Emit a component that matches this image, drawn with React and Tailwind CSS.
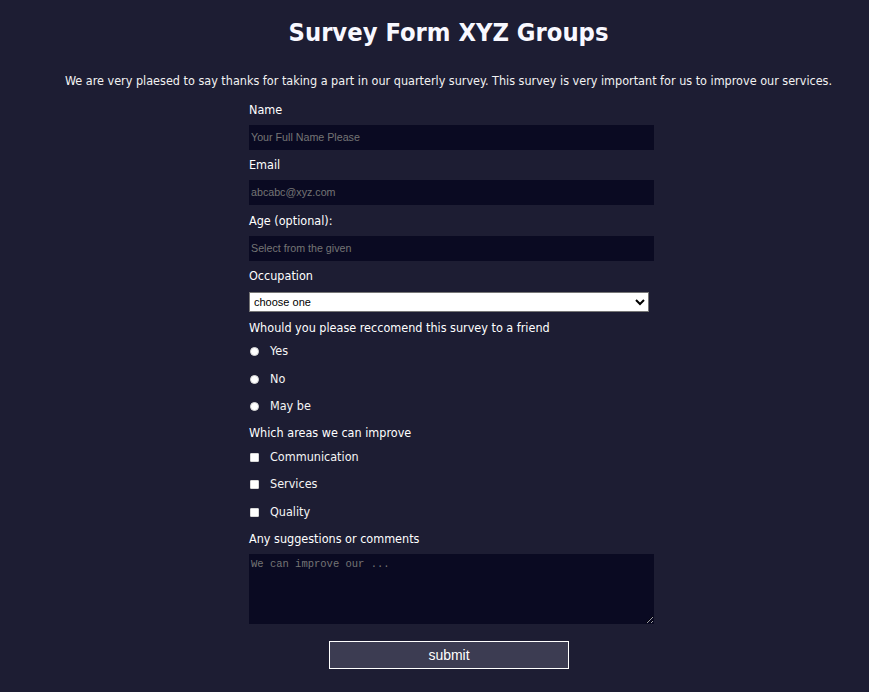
import React from 'react';

const font = { fontFamily: '"DejaVu Sans Condensed", "DejaVu Sans", sans-serif' };
const arial = { fontFamily: '"Liberation Sans", Arial, sans-serif' };

function Choice({ type, name, label }) {
    return (
        <label className="flex items-center h-[27.5px] text-[12.5px] text-[#f5f5f5]">
            <input
                type={type}
                name={name}
                className={`appearance-none m-0 ml-[1px] mr-[11px] w-[9px] h-[9px] bg-white border border-[#d8d8d8] ${type === 'radio' ? 'rounded-full' : 'rounded-[1px]'}`}
            />
            {label}
        </label>
    );
}

export default function App() {
    return (
        <div className="min-h-[692px] bg-[#1d1d33] text-white pl-[28px]" style={font}>
            <h1 className="pt-[17px] text-center text-[25.3px] font-bold leading-[32px] text-[#f8f8ff]">Survey Form XYZ Groups</h1>
            <p className="mt-[23px] text-center text-[12.5px] leading-[17px] text-[#f2f2f2]">
                We are very plaesed to say thanks for taking a part in our quarterly survey. This survey is very important for us to improve our services.
            </p>
            <form className="w-[405px] ml-[221px] mt-[12px] flex flex-col text-[12.5px]">
                <label className="leading-[17px]">Name</label>
                <input
                    placeholder="Your Full Name Please"
                    className="mt-[7px] h-[25px] bg-[#0a0a22] px-[2px] pb-[1px] text-[10.7px] placeholder:text-[#757575] outline-none"
                    style={arial}
                />
                <label className="mt-[6px] leading-[17px]">Email</label>
                <input
                    placeholder="abcabc@xyz.com"
                    className="mt-[7px] h-[25px] bg-[#0a0a22] px-[2px] pb-[1px] text-[10.7px] placeholder:text-[#757575] outline-none"
                    style={arial}
                />
                <label className="mt-[7px] leading-[17px]">Age (optional):</label>
                <input
                    placeholder="Select from the given"
                    className="mt-[7px] h-[25px] bg-[#0a0a22] px-[2px] pb-[1px] text-[10.7px] placeholder:text-[#757575] outline-none"
                    style={arial}
                />
                <label className="mt-[6px] leading-[17px]">Occupation</label>
                <select
                    className="mt-[8px] w-[400px] h-[20px] bg-white border border-[#767676] text-black text-[11px] pl-0"
                    style={arial}
                    defaultValue="choose one"
                >
                    <option>choose one</option>
                    <option>Student</option>
                    <option>Employed</option>
                    <option>Other</option>
                </select>
                <label className="mt-[7px] leading-[17px]">Whould you please reccomend this survey to a friend</label>
                <div className="mt-[2px] flex flex-col">
                    <Choice type="radio" name="rec" label="Yes" />
                    <Choice type="radio" name="rec" label="No" />
                    <Choice type="radio" name="rec" label="May be" />
                </div>
                <label className="mt-[3px] leading-[17px]">Which areas we can improve</label>
                <div className="mt-[3px] flex flex-col">
                    <Choice type="checkbox" name="c1" label="Communication" />
                    <Choice type="checkbox" name="c2" label="Services" />
                    <Choice type="checkbox" name="c3" label="Quality" />
                </div>
                <label className="mt-[4px] leading-[17px]">Any suggestions or comments</label>
                <textarea
                    placeholder="We can improve our ..."
                    className="mt-[7px] h-[70px] bg-[#0a0a22] px-[2px] pt-[3px] text-[10.5px] placeholder:text-[#757575] outline-none"
                    style={{ fontFamily: '"Liberation Mono", "DejaVu Sans Mono", monospace' }}
                />
                <button
                    type="button"
                    className="mt-[17px] ml-[80px] w-[240px] h-[28px] bg-[#3c3c52] border border-white text-[14px] text-white"
                    style={arial}
                >
                    submit
                </button>
            </form>
        </div>
    );
}
